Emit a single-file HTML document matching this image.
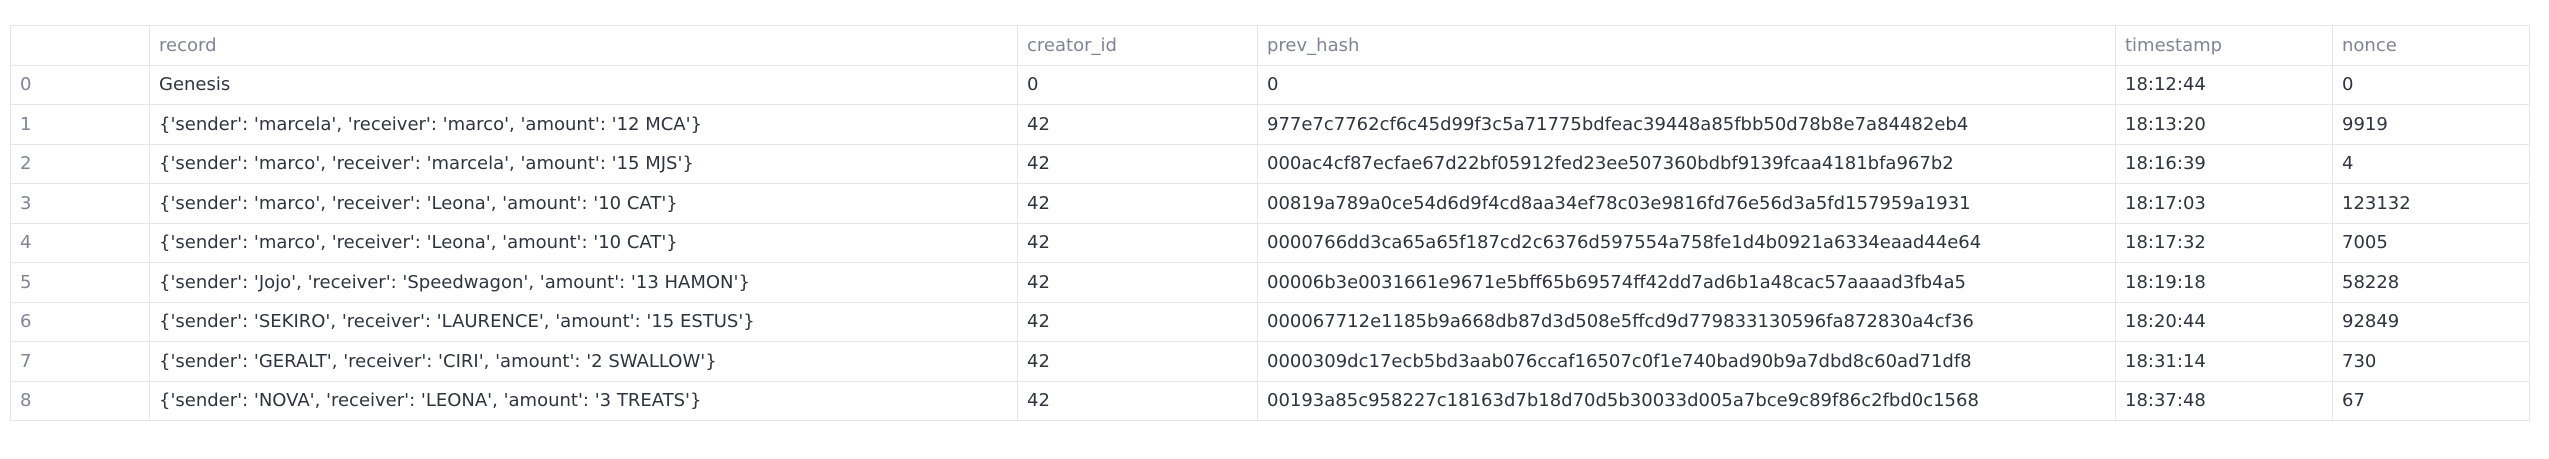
<!DOCTYPE html>
<html><head><meta charset="utf-8"><style>
html,body{margin:0;padding:0;background:#fff;width:2549px;height:459px;overflow:hidden}
table{position:absolute;left:10px;top:25px;border-collapse:collapse;table-layout:fixed;font-family:"DejaVu Sans",sans-serif;font-size:18px;color:#31333F}
td{border:1px solid #e4e6eb;height:39.5px;padding:0 0 0 9px;white-space:nowrap;overflow:hidden;box-sizing:border-box}
tr:first-child td{color:#808495}
td:first-child{color:#808495}
</style></head><body>
<table>
<colgroup><col style="width:139px"><col style="width:868px"><col style="width:240px"><col style="width:858px"><col style="width:217px"><col style="width:197px"></colgroup>
<tr><td></td><td>record</td><td>creator_id</td><td>prev_hash</td><td>timestamp</td><td>nonce</td></tr>
<tr><td>0</td><td>Genesis</td><td>0</td><td>0</td><td>18:12:44</td><td>0</td></tr>
<tr><td>1</td><td>{'sender': 'marcela', 'receiver': 'marco', 'amount': '12 MCA'}</td><td>42</td><td>977e7c7762cf6c45d99f3c5a71775bdfeac39448a85fbb50d78b8e7a84482eb4</td><td>18:13:20</td><td>9919</td></tr>
<tr><td>2</td><td>{'sender': 'marco', 'receiver': 'marcela', 'amount': '15 MJS'}</td><td>42</td><td>000ac4cf87ecfae67d22bf05912fed23ee507360bdbf9139fcaa4181bfa967b2</td><td>18:16:39</td><td>4</td></tr>
<tr><td>3</td><td>{'sender': 'marco', 'receiver': 'Leona', 'amount': '10 CAT'}</td><td>42</td><td>00819a789a0ce54d6d9f4cd8aa34ef78c03e9816fd76e56d3a5fd157959a1931</td><td>18:17:03</td><td>123132</td></tr>
<tr><td>4</td><td>{'sender': 'marco', 'receiver': 'Leona', 'amount': '10 CAT'}</td><td>42</td><td>0000766dd3ca65a65f187cd2c6376d597554a758fe1d4b0921a6334eaad44e64</td><td>18:17:32</td><td>7005</td></tr>
<tr><td>5</td><td>{'sender': 'Jojo', 'receiver': 'Speedwagon', 'amount': '13 HAMON'}</td><td>42</td><td>00006b3e0031661e9671e5bff65b69574ff42dd7ad6b1a48cac57aaaad3fb4a5</td><td>18:19:18</td><td>58228</td></tr>
<tr><td>6</td><td>{'sender': 'SEKIRO', 'receiver': 'LAURENCE', 'amount': '15 ESTUS'}</td><td>42</td><td>000067712e1185b9a668db87d3d508e5ffcd9d779833130596fa872830a4cf36</td><td>18:20:44</td><td>92849</td></tr>
<tr><td>7</td><td>{'sender': 'GERALT', 'receiver': 'CIRI', 'amount': '2 SWALLOW'}</td><td>42</td><td>0000309dc17ecb5bd3aab076ccaf16507c0f1e740bad90b9a7dbd8c60ad71df8</td><td>18:31:14</td><td>730</td></tr>
<tr><td>8</td><td>{'sender': 'NOVA', 'receiver': 'LEONA', 'amount': '3 TREATS'}</td><td>42</td><td>00193a85c958227c18163d7b18d70d5b30033d005a7bce9c89f86c2fbd0c1568</td><td>18:37:48</td><td>67</td></tr>
</table>
</body></html>
